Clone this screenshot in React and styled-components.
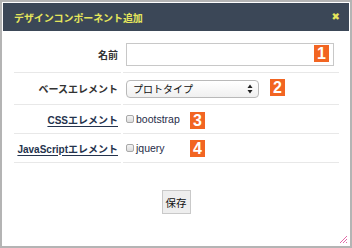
import React from "react";
import styled, { createGlobalStyle } from "styled-components";

const Global = createGlobalStyle`
  html, body { margin: 0; padding: 0; background: #fff; }
  body { font-family: "Liberation Sans", "Noto Sans CJK JP", sans-serif; }
  * { box-sizing: border-box; }
`;

const Dialog = styled.div`
  position: relative;
  width: 352px;
  height: 248px;
  border: 2px solid #b4b4b4;
  padding: 1px 1px 0 1px;
  background: #fff;
  display: flex;
  flex-direction: column;
`;

const Header = styled.div`
  height: 28px;
  background: #3b4757;
  display: flex;
  align-items: center;
  justify-content: space-between;
  padding: 0 9px 0 11px;
`;

const Title = styled.div`
  color: #e6e65c;
  font-family: "Noto Sans CJK JP", sans-serif;
  font-weight: 700;
  font-size: 10px;
  letter-spacing: -0.1px;
`;

const Close = styled.div`
  color: #e6e65c;
  font-family: "DejaVu Sans", sans-serif;
  font-weight: 700;
  font-size: 10px;
  line-height: 1;
`;

const Form = styled.div`
  margin: 6px 10px 0 11px;
  display: flex;
  flex-direction: column;
`;

const Row = styled.div`
  display: grid;
  grid-template-columns: 107px 1fr;
  column-gap: 2px;
  height: ${(p) => p.$h}px;
`;

const LabelCell = styled.div`
  border-bottom: 1px solid #e8e8e8;
  display: flex;
  align-items: center;
  justify-content: flex-end;
  padding-right: 3px;
  font-family: "Liberation Sans", "Noto Sans CJK JP", sans-serif;
  font-weight: 700;
  font-size: 10px;
  color: ${(p) => (p.$link ? "#25334d" : "#333")};
`;

const LinkText = styled.span`
  text-decoration: underline;
  text-underline-offset: 2px;
  text-decoration-thickness: 1px;
`;

const FieldCell = styled.div`
  border-bottom: 1px solid #e8e8e8;
  display: flex;
  align-items: center;
  padding-left: 3px;
  position: relative;
`;

const TextInput = styled.div`
  width: 208px;
  height: 23px;
  border: 1px solid #c8c8c8;
  background: #fff;
`;

const Select = styled.div`
  width: 133px;
  height: 18px;
  border: 1px solid #b9b9b9;
  border-radius: 4px;
  background: linear-gradient(#ffffff, #f0f0f0);
  display: flex;
  align-items: center;
  justify-content: space-between;
  padding: 0 5px 0 6px;
  font-family: "Noto Sans CJK JP", sans-serif;
  font-size: 10px;
  color: #111;
`;

const Check = styled.span`
  display: inline-block;
  width: 8px;
  height: 8px;
  border: 1px solid #a8a8a8;
  border-radius: 2px;
  background: linear-gradient(#f4f4f4, #dcdcdc);
  margin-right: 2px;
`;

const CheckText = styled.span`
  font-family: "Liberation Sans", sans-serif;
  font-size: 10.5px;
  color: #1f2c48;
`;

const Badge = styled.div`
  position: absolute;
  left: ${(p) => p.$x}px;
  top: ${(p) => p.$y}px;
  width: 15px;
  height: 17px;
  background: #f26522;
  color: #fff;
  font-family: "Liberation Sans", sans-serif;
  font-weight: 700;
  font-size: 16px;
  line-height: 17px;
  text-align: center;
`;

const Footer = styled.div`
  display: flex;
  justify-content: center;
  margin-top: 27px;
`;

const Button = styled.button`
  width: 29px;
  height: 24px;
  border: 1px solid #c9c9c9;
  background: #eeeeee;
  font-family: "Noto Sans CJK JP", sans-serif;
  font-size: 10.5px;
  color: #111;
  padding: 0;
  margin-left: 0px;
`;

const Grip = styled.svg`
  position: absolute;
  right: 2px;
  bottom: 2px;
`;

export default function App() {
  return (
    <>
      <Global />
      <Dialog>
        <Header>
          <Title>デザインコンポーネント追加</Title>
          <Close>✖</Close>
        </Header>
        <Form>
          <Row $h={36}>
            <LabelCell>名前</LabelCell>
            <FieldCell>
              <TextInput />
              <Badge $x={191} $y={8}>1</Badge>
            </FieldCell>
          </Row>
          <Row $h={32}>
            <LabelCell>ベースエレメント</LabelCell>
            <FieldCell>
              <Select>
                <span>プロトタイプ</span>
                <svg width="6" height="10" viewBox="0 0 6 10">
                  <path d="M3 0.5 L5.5 4 L0.5 4 Z" fill="#222" />
                  <path d="M3 9.5 L5.5 6 L0.5 6 Z" fill="#222" />
                </svg>
              </Select>
              <Badge $x={147} $y={6}>2</Badge>
            </FieldCell>
          </Row>
          <Row $h={29}>
            <LabelCell $link>
              <LinkText>CSSエレメント</LinkText>
            </LabelCell>
            <FieldCell>
              <Check />
              <CheckText>bootstrap</CheckText>
              <Badge $x={67} $y={7}>3</Badge>
            </FieldCell>
          </Row>
          <Row $h={29}>
            <LabelCell $link>
              <LinkText>JavaScriptエレメント</LinkText>
            </LabelCell>
            <FieldCell>
              <Check />
              <CheckText>jquery</CheckText>
              <Badge $x={67} $y={6}>4</Badge>
            </FieldCell>
          </Row>
        </Form>
        <Footer>
          <Button>保存</Button>
        </Footer>
        <Grip width="9" height="9" viewBox="0 0 9 9">
          <path d="M1 8 L8 1 M4 8 L8 4 M7 8 L8 7" stroke="#e26aa8" strokeWidth="1" />
        </Grip>
      </Dialog>
    </>
  );
}
